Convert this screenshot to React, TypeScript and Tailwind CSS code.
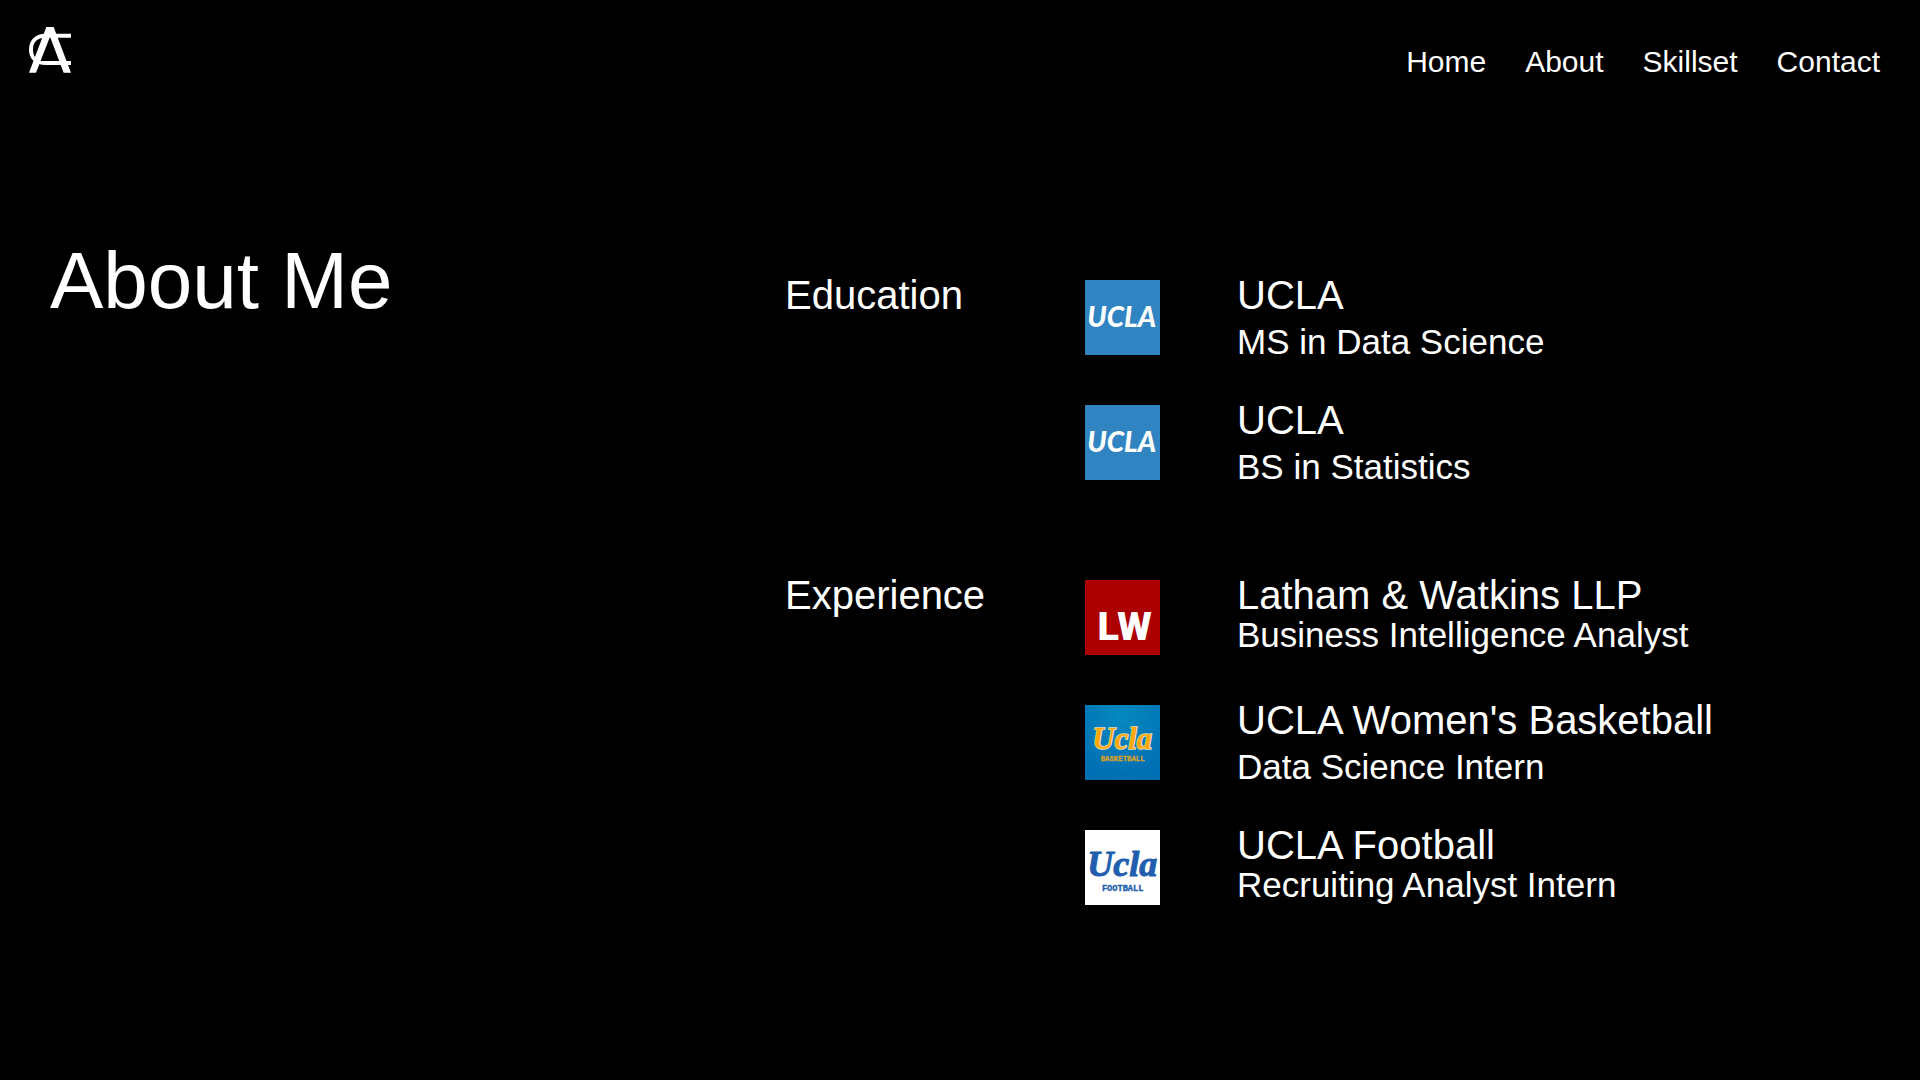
import type { ReactNode } from "react";

const navItems = ["Home", "About", "Skillset", "Contact"];

function Monogram() {
  return (
    <svg viewBox="0 0 126 138" className="h-[46px] w-[42px]" fill="none" aria-hidden="true">
      <path d="M126 26H50C22 26 6 42 6 68S24 108 50 108H126" stroke="#fff" strokeWidth="12" />
      <path d="M63 28L92 102H34Z" fill="#000" />
      <path d="M52 0H74L126 137H104L63 29L21 137H0Z" fill="#fff" />
    </svg>
  );
}

function Tile({ label, children }: { label: string; children: ReactNode }) {
  return (
    <svg viewBox="0 0 225 225" className="size-[75px] shrink-0" role="img" aria-label={label}>
      {children}
    </svg>
  );
}

function UclaLogo() {
  return (
    <Tile label="UCLA">
      <rect width="225" height="225" fill="#3084c2" />
      <text x="110" y="142" textAnchor="middle" fontFamily="Lato" fontStyle="italic" fontWeight="900" fontSize="84" fill="#fff">
        UCLA
      </text>
    </Tile>
  );
}

function LathamLogo() {
  return (
    <Tile label="Latham & Watkins">
      <rect width="225" height="225" fill="#ac0000" />
      <text x="119" y="179" textAnchor="middle" fontFamily="Roboto" fontWeight="900" fontSize="119" fill="#fff">
        LW
      </text>
    </Tile>
  );
}

function BasketballLogo() {
  return (
    <Tile label="UCLA Basketball">
      <defs>
        <radialGradient id="court" cx="50%" cy="15%" r="85%">
          <stop offset="0" stopColor="#0588bf" />
          <stop offset="1" stopColor="#006eb3" />
        </radialGradient>
      </defs>
      <rect width="225" height="225" fill="url(#court)" />
      <text x="112" y="133" textAnchor="middle" fontFamily="Liberation Serif" fontStyle="italic" fontWeight="700" fontSize="92" fill="#ffa708" stroke="#e5dfb8" strokeWidth="5" paintOrder="stroke">
        Ucla
      </text>
      <text x="113" y="169" textAnchor="middle" fontFamily="Liberation Mono" fontWeight="700" fontSize="22" fill="#d9a02a" stroke="#d9a02a">
        BASKETBALL
      </text>
    </Tile>
  );
}

function FootballLogo() {
  return (
    <Tile label="UCLA Football">
      <rect width="225" height="225" fill="#fff" />
      <text x="112" y="137" textAnchor="middle" fontFamily="Liberation Serif" fontStyle="italic" fontWeight="700" fontSize="108" fill="#215ead" stroke="#215ead" strokeWidth="3">
        Ucla
      </text>
      <text x="113" y="182" textAnchor="middle" fontFamily="Liberation Mono" fontWeight="700" fontSize="26" fill="#215ead" stroke="#215ead">
        FOOTBALL
      </text>
    </Tile>
  );
}

type EntryProps = { logo: ReactNode; title: string; detail: string; tight?: boolean };

function Entry({ logo, title, detail, tight }: EntryProps) {
  return (
    <li className="flex h-[75px] gap-[77px]">
      {logo}
      <div className="whitespace-nowrap">
        <h3 className="text-[40px] leading-[30px]">{title}</h3>
        <p className={tight ? "mt-[5px] text-[35px] leading-[40px]" : "mt-3 text-[35px] leading-[40px]"}>{detail}</p>
      </div>
    </li>
  );
}

function Section({ title, children }: { title: string; children: ReactNode }) {
  return (
    <section className="grid grid-cols-[300fr_785fr]">
      <h2 className="text-[40px] leading-[30px]">{title}</h2>
      <ul className="flex flex-col gap-[50px]">{children}</ul>
    </section>
  );
}

export default function App() {
  return (
    <div className="min-h-screen bg-black font-['Liberation_Sans',Arial,sans-serif] text-white">
      <header className="flex items-start justify-between pt-[27px] pr-10 pl-[29px]">
        <a href="#home" aria-label="Home page">
          <Monogram />
        </a>
        <nav className="flex gap-[39px] pt-[17px] text-[30px] leading-[36px]">
          {navItems.map((item) => (
            <a key={item} href={`#${item.toLowerCase()}`}>
              {item}
            </a>
          ))}
        </nav>
      </header>
      <main className="grid grid-cols-[735fr_1085fr] px-[50px] pt-[160px]">
        <h1 className="text-[80px] leading-[82px]">About Me</h1>
        <div className="flex flex-col gap-[100px] pt-10">
          <Section title="Education">
            <Entry logo={<UclaLogo />} title="UCLA" detail="MS in Data Science" />
            <Entry logo={<UclaLogo />} title="UCLA" detail="BS in Statistics" />
          </Section>
          <Section title="Experience">
            <Entry logo={<LathamLogo />} title="Latham & Watkins LLP" detail="Business Intelligence Analyst" tight />
            <Entry logo={<BasketballLogo />} title="UCLA Women's Basketball" detail="Data Science Intern" />
            <Entry logo={<FootballLogo />} title="UCLA Football" detail="Recruiting Analyst Intern" tight />
          </Section>
        </div>
      </main>
    </div>
  );
}
